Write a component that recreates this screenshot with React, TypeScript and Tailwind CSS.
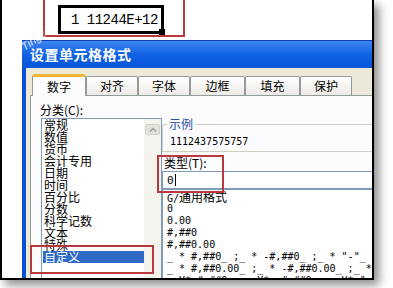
const cjk = { fontFamily: '"Noto Sans CJK SC", "Noto Sans", sans-serif' };
const mono = { fontFamily: '"DejaVu Sans Mono", "Noto Sans CJK SC", monospace' };

const cats = ["常规", "数值", "货币", "会计专用", "日期", "时间", "百分比", "分数", "科学记数", "文本", "特殊", "自定义"];
const fmts = [
  "G/通用格式",
  "0",
  "0.00",
  "#,##0",
  "#,##0.00",
  '_ * #,##0_ ;_ * -#,##0_ ;_ * "-"_ ;_ @_ ',
  '_ * #,##0.00_ ;_ * -#,##0.00_ ;_ * "-"??_ ;_ @_ ',
  '_ ¥* #,##0_ ;_ ¥* -#,##0_ ;_ ¥* "-"_ ;_ @_ ',
];
const tabs = [
  { t: "数字", w: 54 },
  { t: "对齐", w: 52 },
  { t: "字体", w: 52 },
  { t: "边框", w: 55 },
  { t: "填充", w: 55 },
  { t: "保护", w: 52 },
];

export default function App() {
  return (
    <div className="w-[393px] h-[288px] bg-white overflow-hidden relative">
      <div className="relative w-[374px] h-[280px] border-l-2 border-r-2 border-b-2 border-black bg-white overflow-hidden shadow-[5px_5px_9px_rgba(0,0,0,0.45)]">
        {/* Top cell area */}
        <div className="h-[40px] relative">
          <div className="absolute left-[41px] -top-[2px] w-[142px] h-[39px] border-2 border-[#b9383d]" />
          <div className="absolute left-[56px] top-[5px] w-[106px] h-[29px] border-[3px] border-black flex items-center pl-[10px]">
            <span className="text-[14px] text-black tracking-[-0.5px] leading-none" style={{ fontFamily: '"Liberation Mono", monospace' }}>
              1 11244E+12
            </span>
            <div className="absolute -right-[4px] -bottom-[4px] w-[6px] h-[6px] bg-black" />
          </div>
          <span
            className="absolute left-[18px] top-[32px] text-[11px] text-white/80 -rotate-[35deg] italic"
            style={{ fontFamily: '"Liberation Sans", sans-serif' }}
          >
            Tingz
          </span>
        </div>

        {/* Dialog */}
        <div className="ml-[20px] flex flex-col">
          {/* title bar */}
          <div className="h-[28px] flex items-center pl-[8px] bg-gradient-to-b from-[#3d86f2] via-[#1162e4] to-[#0a55d8] border-t border-[#0b3fb0]">
            <span className="text-white text-[14px] font-bold tracking-[0.5px]" style={cjk}>设置单元格格式</span>
          </div>
          {/* body */}
          <div className="flex border-l-[4px] border-[#0a4fd6] bg-[#ECE9D8] h-[220px]">
            <div className="pl-[4px] pt-[6px] flex flex-col w-full">
              {/* tabs */}
              <div className="flex items-end h-[22px] pl-[2px] relative z-10">
                {tabs.map((tb, i) =>
                  i === 0 ? (
                    <div
                      key={tb.t}
                      className="h-[22px] flex items-center justify-center bg-[#FCFCFE] border-l border-r border-[#919B9C] border-t-[3px] border-t-[#F5B534] rounded-t-[3px] -mb-[1px]"
                      style={{ width: tb.w }}
                    >
                      <span className="text-[12px] text-black" style={cjk}>{tb.t}</span>
                    </div>
                  ) : (
                    <div
                      key={tb.t}
                      className="h-[19px] flex items-center justify-center bg-gradient-to-b from-white to-[#ECEBE6] border border-[#919B9C] border-b-0 rounded-t-[2px]"
                      style={{ width: tb.w }}
                    >
                      <span className="text-[12px] text-black" style={cjk}>{tb.t}</span>
                    </div>
                  )
                )}
              </div>
              {/* panel */}
              <div className="flex-1 bg-[#FCFCFE] border-l border-t border-[#919B9C] flex">
                {/* left column */}
                <div className="flex flex-col pl-[9px] pt-[7px] w-[132px]">
                  <div className="h-[14px] text-[12px] leading-[14px] text-black" style={cjk}>分类(C):</div>
                  <div className="mt-[1px] ml-[1px] w-[121px] h-[170px] border border-[#7F9DB9] bg-white flex">
                    <div className="flex-1 flex flex-col pl-[1px]">
                      {cats.map((c) => (
                        <div
                          key={c}
                          className={`h-[12px] leading-[12px] text-[12px] pl-[1px] shrink-0 ${c === "自定义" ? "bg-[#316AC5] text-white" : "text-black"}`}
                          style={cjk}
                        >
                          {c}
                        </div>
                      ))}
                    </div>
                    <div className="w-[17px] bg-[#F4F3EE] flex flex-col pt-[5px] pl-[1px]">
                      <div className="w-[15px] h-[11px] bg-[#E3E3DD] border border-[#d4d4cc] rounded-[2px] flex items-center justify-center">
                        <svg width="8" height="5" viewBox="0 0 8 5">
                          <path d="M1 4.5 L4 1.5 L7 4.5" stroke="#9a9a9a" strokeWidth="1.4" fill="none" />
                        </svg>
                      </div>
                    </div>
                  </div>
                </div>
                {/* right column */}
                <div className="flex flex-col pt-[28px] flex-1">
                  <div className="relative h-[28px] border-t border-l border-b border-[#D0D0BF] rounded-tl-[3px]">
                    <span className="absolute left-[4px] -top-[8px] px-[2px] bg-[#FCFCFE] text-[12px] leading-[14px] text-[#1f4fa8]" style={cjk}>示例</span>
                    <div className="pl-[7px] pt-[11px] text-[10px] leading-[12px] text-black" style={mono}>1112437575757</div>
                  </div>
                  <div className="mt-[4px] h-[13px] text-[12px] leading-[13px] text-black pl-[2px]" style={cjk}>类型(T):</div>
                  <div className="mt-[2px] h-[18px] border border-[#7F9DB9] border-r-0 bg-white flex items-center pl-[4px] shrink-0">
                    <span className="text-[11px] leading-none text-black" style={mono}>0</span>
                    <span className="ml-[1px] w-[1px] h-[12px] bg-black" />
                  </div>
                  <div className="flex-1 border-l border-t border-[#7F9DB9] bg-white pl-[4px] pt-[1px] overflow-hidden">
                    {fmts.map((f, i) => (
                      <div
                        key={i}
                        className="h-[12px] leading-[12px] text-[10px] whitespace-pre text-black"
                        style={mono}
                      >
                        {i === 0 ? (
                          <>
                            <span>G/</span>
                            <span className="text-[12px]" style={cjk}>通用格式</span>
                          </>
                        ) : (
                          f
                        )}
                      </div>
                    ))}
                  </div>
                </div>
              </div>
            </div>
          </div>
        </div>

        {/* red annotation rectangles */}
        <div className="absolute left-[155px] top-[155px] w-[67px] h-[38px] border-2 border-[#b9383d]" />
        <div className="absolute left-[28px] top-[245px] w-[124px] h-[29px] border-2 border-[#b9383d]" />
      </div>
    </div>
  );
}
